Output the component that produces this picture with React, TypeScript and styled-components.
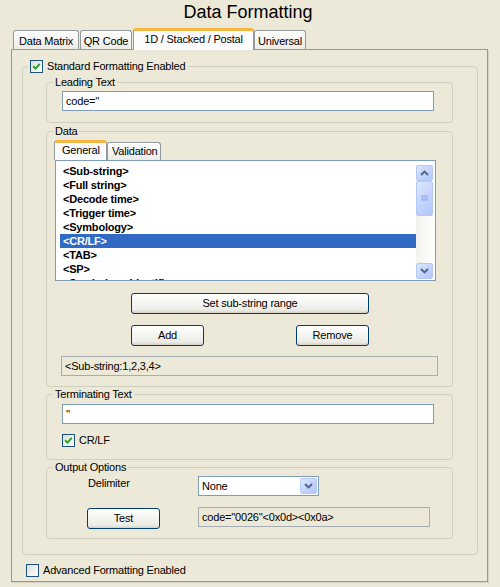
import React from 'react';
import styled, { createGlobalStyle } from 'styled-components';

const Global = createGlobalStyle`
  html, body { margin: 0; padding: 0; background: #ECE9D8; }
  body { font-family: "Liberation Sans", Arial, sans-serif; font-size: 11px; color: #000; letter-spacing: -0.2px; }
  * { box-sizing: border-box; }
`;

const Page = styled.div`
  width: 500px;
  height: 587px;
  background: #ECE9D8;
  display: flex;
  flex-direction: column;
  overflow: hidden;
`;

const Title = styled.h1`
  margin: 1px 0 0 0;
  height: 27px;
  font-size: 18px;
  line-height: 22px;
  font-weight: normal;
  text-align: center;
  padding-right: 4px;
  letter-spacing: 0;
`;

const TabStrip = styled.div`
  display: flex;
  align-items: flex-end;
  height: 21px;
  padding-left: 13px;
`;

const Tab = styled.div<{ $w: number; $ml?: number; $active?: boolean }>`
  width: ${p => p.$w}px;
  margin-left: ${p => p.$ml ?? 0}px;
  height: ${p => (p.$active ? 22 : 19)}px;
  margin-bottom: ${p => (p.$active ? -1 : 0)}px;
  position: relative;
  z-index: ${p => (p.$active ? 2 : 1)};
  border: 1px solid #919B9C;
  border-bottom: none;
  border-top: ${p => (p.$active ? '3px solid #F5B740' : '1px solid #919B9C')};
  border-radius: 3px 3px 0 0;
  background: ${p => (p.$active ? '#FCFCFE' : 'linear-gradient(#FFFFFF, #ECEBE6)')};
  text-align: center;
  line-height: 13px;
  padding-top: ${p => (p.$active ? 2 : 4)}px;
  white-space: nowrap;
`;

const Panel = styled.div`
  margin-left: 11px;
  width: 477px;
  height: 533px;
  border: 1px solid #919B9C;
  box-shadow: 1px 1px 0 #D4D1C0;
  background: #ECE9D8;
  display: flex;
  flex-direction: column;
`;

const OuterSet = styled.fieldset`
  margin: 10px 0 0 10px;
  width: 456px;
  padding: 0 0 15px 0;
  border: 1px solid #D0D0BF;
  border-radius: 4px;
  min-inline-size: 0;
  display: flex;
  flex-direction: column;
  align-items: flex-start;
`;

const CheckLegend = styled.legend`
  margin-left: 5px;
  padding: 0 3px 0 2px;
  height: 13px;
  line-height: 13px;
  display: flex;
  align-items: center;
  gap: 4px;
`;

const Group = styled.fieldset<{ $mt: number; $pb: number }>`
  margin: ${p => p.$mt}px 0 0 23px;
  width: 407px;
  padding: 0 0 ${p => p.$pb}px 0;
  border: 1px solid #D0D0BF;
  border-radius: 4px;
  min-inline-size: 0;
  display: flex;
  flex-direction: column;
  align-items: flex-start;
`;

const Legend = styled.legend`
  margin-left: 6px;
  padding: 0 2px;
  height: 13px;
  line-height: 13px;
`;

const TextBox = styled.input<{ $w: number; $ml: number; $mt: number }>`
  width: ${p => p.$w}px;
  margin: ${p => p.$mt}px 0 0 ${p => p.$ml}px;
  height: 20px;
  border: 1px solid #7F9DB9;
  background: #FFFFFF;
  padding: 0 3px;
  font: inherit;
  letter-spacing: inherit;
  color: #000;
  outline: none;
`;

const ReadField = styled.div<{ $w: number; $ml: number; $mt: number }>`
  width: ${p => p.$w}px;
  margin: ${p => p.$mt}px 0 0 ${p => p.$ml}px;
  height: 20px;
  border: 1px solid #A5ACB2;
  background: #ECE9D8;
  padding: 0 3px;
  line-height: 18px;
  white-space: nowrap;
`;

const Box = styled.span`
  width: 13px;
  height: 13px;
  flex: none;
  border: 1px solid #1C5180;
  background: linear-gradient(135deg, #DCDCD7 0%, #FFFFFF 100%);
  display: inline-flex;
  align-items: center;
  justify-content: center;
`;

const CheckRow = styled.div<{ $ml: number; $mt: number }>`
  display: flex;
  align-items: center;
  gap: 4px;
  height: 13px;
  line-height: 13px;
  margin: ${p => p.$mt}px 0 0 ${p => p.$ml}px;
`;

const CheckBox = ({ checked }: { checked?: boolean }) => (
  <Box>
    {checked && (
      <svg width="9" height="9" viewBox="0 0 9 9">
        <path d="M1.2 4.2 L3.4 6.6 L7.8 1.8" fill="none" stroke="#21A121" strokeWidth="1.9" />
      </svg>
    )}
  </Box>
);

const InnerTabs = styled.div`
  display: flex;
  align-items: flex-end;
  height: 20px;
  margin: 2px 0 0 7px;
`;

const SmallTab = styled.div<{ $w: number; $active?: boolean }>`
  width: ${p => p.$w}px;
  height: ${p => (p.$active ? 20 : 18)}px;
  border: 1px solid #919B9C;
  border-bottom: none;
  border-top: ${p => (p.$active ? '3px solid #F5B740' : '1px solid #919B9C')};
  border-radius: 3px 3px 0 0;
  background: ${p => (p.$active ? '#FCFCFE' : 'linear-gradient(#FFFFFF, #ECEBE6)')};
  line-height: 13px;
  padding: ${p => (p.$active ? '1px 0 0 7px' : '2px 0 0 4px')};
  white-space: nowrap;
`;

const ListBox = styled.div`
  margin-left: 8px;
  width: 381px;
  height: 121px;
  border: 1px solid #7F9DB9;
  background: #FFFFFF;
  display: flex;
`;

const ListItems = styled.div`
  flex: 1;
  padding: 3px 0 0 4px;
  overflow: hidden;
`;

const Row = styled.div<{ $sel?: boolean }>`
  height: 14px;
  line-height: 14px;
  padding-left: 3px;
  font-weight: bold;
  white-space: nowrap;
  background: ${p => (p.$sel ? '#316AC5' : 'transparent')};
  color: ${p => (p.$sel ? '#FFFFFF' : '#000000')};
`;

const ScrollBar = styled.div`
  width: 17px;
  margin: 4px 2px 1px 0;
  display: flex;
  flex-direction: column;
  background: linear-gradient(90deg, #F3F1EC, #FEFEFB);
`;

const ScrollBtn = styled.div<{ $h: number }>`
  height: ${p => p.$h}px;
  flex: none;
  border: 1px solid #B4C8F6;
  border-radius: 2px;
  background: linear-gradient(135deg, #DDE7FE 0%, #C3D3FD 55%, #B2C7F8 100%);
  display: flex;
  align-items: center;
  justify-content: center;
`;

const Track = styled.div`
  flex: 1;
`;

const Arrow = ({ up }: { up?: boolean }) => (
  <svg width="9" height="6" viewBox="0 0 9 6">
    <path
      d={up ? 'M1 5 L4.5 1.5 L8 5' : 'M1 1 L4.5 4.5 L8 1'}
      fill="none"
      stroke="#4D6185"
      strokeWidth="1.8"
    />
  </svg>
);

const Grip = () => (
  <svg width="7" height="7" viewBox="0 0 7 7">
    <path d="M0 1 H7 M0 3 H7 M0 5 H7" stroke="#8CA6E4" strokeWidth="1" />
  </svg>
);

const Button = styled.button<{ $w: number }>`
  width: ${p => p.$w}px;
  height: 21px;
  flex: none;
  border: 1px solid #003C74;
  border-radius: 3px;
  background: linear-gradient(#FFFFFF 0%, #F4F4F0 50%, #ECEBE6 85%, #D6D0C5 100%);
  font: inherit;
  letter-spacing: inherit;
  color: #000;
  padding: 0;
  line-height: 19px;
  text-align: center;
`;

const ButtonLine = styled.div<{ $mt: number }>`
  width: 238px;
  margin: ${p => p.$mt}px 0 0 84px;
  display: flex;
  justify-content: space-between;
`;

const FormRow = styled.div<{ $mt: number }>`
  display: flex;
  align-items: flex-start;
  margin-top: ${p => p.$mt}px;
`;

const Label = styled.div<{ $ml: number; $w: number }>`
  margin-left: ${p => p.$ml}px;
  width: ${p => p.$w}px;
  line-height: 13px;
  padding-top: 1px;
`;

const Select = styled.div`
  width: 121px;
  height: 20px;
  border: 1px solid #7F9DB9;
  background: #FFFFFF;
  display: flex;
  align-items: center;
  justify-content: space-between;
  padding: 0 1px 0 3px;
`;

const DropBtn = styled.div`
  width: 17px;
  height: 16px;
  border: 1px solid #B4C8F6;
  border-radius: 2px;
  background: linear-gradient(135deg, #DDE7FE 0%, #C3D3FD 55%, #B2C7F8 100%);
  display: flex;
  align-items: center;
  justify-content: center;
`;

const ButtonSlot = styled.div<{ $ml: number; $mt: number; $w: number }>`
  margin: ${p => p.$mt}px 0 0 ${p => p.$ml}px;
  width: ${p => p.$w}px;
`;

const items = [
  '<Sub-string>',
  '<Full string>',
  '<Decode time>',
  '<Trigger time>',
  '<Symbology>',
  '<CR/LF>',
  '<TAB>',
  '<SP>',
  '<Symbology identifier>',
];

export default function App() {
  return (
    <Page>
      <Global />
      <Title>Data Formatting</Title>
      <TabStrip>
        <Tab $w={66}>Data Matrix</Tab>
        <Tab $w={52} $ml={1}>QR Code</Tab>
        <Tab $w={121} $ml={1} $active>1D / Stacked / Postal</Tab>
        <Tab $w={52}>Universal</Tab>
      </TabStrip>
      <Panel>
        <OuterSet>
          <CheckLegend>
            <CheckBox checked />
            <span>Standard Formatting Enabled</span>
          </CheckLegend>

          <Group $mt={3} $pb={11}>
            <Legend>Leading Text</Legend>
            <TextBox $w={372} $ml={15} $mt={2} readOnly value="code=''" />
          </Group>

          <Group $mt={2} $pb={10}>
            <Legend>Data</Legend>
            <InnerTabs>
              <SmallTab $w={53} $active>General</SmallTab>
              <SmallTab $w={54}>Validation</SmallTab>
            </InnerTabs>
            <ListBox>
              <ListItems>
                {items.map(t => (
                  <Row key={t} $sel={t === '<CR/LF>'}>{t}</Row>
                ))}
              </ListItems>
              <ScrollBar>
                <ScrollBtn $h={16}><Arrow up /></ScrollBtn>
                <ScrollBtn $h={35}><Grip /></ScrollBtn>
                <Track />
                <ScrollBtn $h={16}><Arrow /></ScrollBtn>
              </ScrollBar>
            </ListBox>
            <ButtonLine $mt={12}>
              <Button $w={238}>Set sub-string range</Button>
            </ButtonLine>
            <ButtonLine $mt={11}>
              <Button $w={73}>Add</Button>
              <Button $w={73}>Remove</Button>
            </ButtonLine>
            <ReadField $w={377} $ml={14} $mt={10}>&lt;Sub-string:1,2,3,4&gt;</ReadField>
          </Group>

          <Group $mt={1} $pb={12}>
            <Legend>Terminating Text</Legend>
            <TextBox $w={372} $ml={15} $mt={3} readOnly value="''" />
            <CheckRow $ml={15} $mt={10}>
              <CheckBox checked />
              <span>CR/LF</span>
            </CheckRow>
          </Group>

          <Group $mt={1} $pb={9}>
            <Legend>Output Options</Legend>
            <FormRow $mt={2}>
              <Label $ml={41} $w={110}>Delimiter</Label>
              <Select>
                <span>None</span>
                <DropBtn><Arrow /></DropBtn>
              </Select>
            </FormRow>
            <FormRow $mt={11}>
              <ButtonSlot $ml={40} $mt={1} $w={111}>
                <Button $w={73}>Test</Button>
              </ButtonSlot>
              <ReadField $w={232} $ml={0} $mt={0}>code=''0026''&lt;0x0d&gt;&lt;0x0a&gt;</ReadField>
            </FormRow>
          </Group>
        </OuterSet>
        <CheckRow $ml={14} $mt={9}>
          <CheckBox />
          <span>Advanced Formatting Enabled</span>
        </CheckRow>
      </Panel>
    </Page>
  );
}
